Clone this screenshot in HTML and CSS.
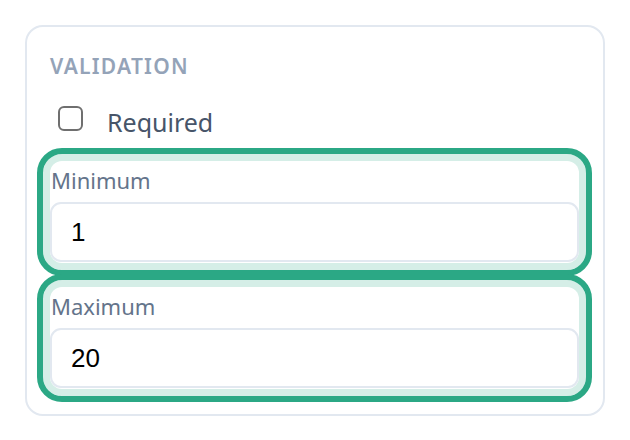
FILE: index.html
```html
<!DOCTYPE html>
<html lang="en">
<head>
    <meta charset="UTF-8">
    <meta name="viewport" content="width=device-width, initial-scale=1.0">
    <title>Field Validation</title>
    <link rel="stylesheet" href="styles.css">
</head>
<body>

<div class="validation-card">
    <h4 class="section-title">Validation</h4>

    <label class="check-row">
        <span class="checkbox"></span>
        <span class="check-label">Required</span>
    </label>

    <div class="field-list">
        <div class="field focused">
            <label class="field-label" for="minInput">Minimum</label>
            <input class="field-input" type="text" id="minInput" value="1">
        </div>

        <div class="field focused">
            <label class="field-label" for="maxInput">Maximum</label>
            <input class="field-input" type="text" id="maxInput" value="20">
        </div>
    </div>
</div>

</body>
</html>
```

FILE: styles.css
```css
body {
    font-family: "Noto Sans", "Open Sans", sans-serif;
    background-color: #fff;
    margin: 0;
    padding: 25px;
}

.validation-card {
    width: 580px;
    box-sizing: border-box;
    border: 2px solid #e2e8f0;
    border-radius: 18px;
    background-color: #fff;
    padding: 25px 24px 25px 23px;
}

.section-title {
    margin: 0;
    font-size: 21px;
    line-height: 28px;
    font-weight: 600;
    letter-spacing: 0.06em;
    text-transform: uppercase;
    color: #94a3b8;
}

.check-row {
    display: flex;
    align-items: flex-start;
    gap: 24px;
    margin-top: 24px;
    padding-left: 8px;
    height: 36px;
}

.checkbox {
    width: 25px;
    height: 25px;
    box-sizing: border-box;
    border: 2px solid #6f6f6f;
    border-radius: 6px;
    margin-top: 2px;
    background-color: #fff;
}

.check-label {
    font-size: 25px;
    line-height: 36px;
    color: #475569;
}

.field-list {
    display: flex;
    flex-direction: column;
    gap: 24px;
    margin-top: 21px;
}

.field {
    border-radius: 12px;
    padding: 4px 0 1px;
    background-color: #fff;
}

.field.focused {
    box-shadow: 0 0 0 7px #d5eee7;
    outline: 6px solid #2ba885;
    outline-offset: 7px;
}

.field-label {
    display: block;
    font-size: 22px;
    line-height: 30px;
    color: #64748b;
    padding-left: 1px;
}

.field-input {
    display: block;
    width: 100%;
    height: 60px;
    box-sizing: border-box;
    margin-top: 7px;
    border: 2px solid #e2e8f0;
    border-radius: 11px;
    padding: 0 19px;
    font-family: "Liberation Sans", Arial, sans-serif;
    font-size: 26px;
    color: #000;
    background-color: #fff;
    outline: none;
}
```
